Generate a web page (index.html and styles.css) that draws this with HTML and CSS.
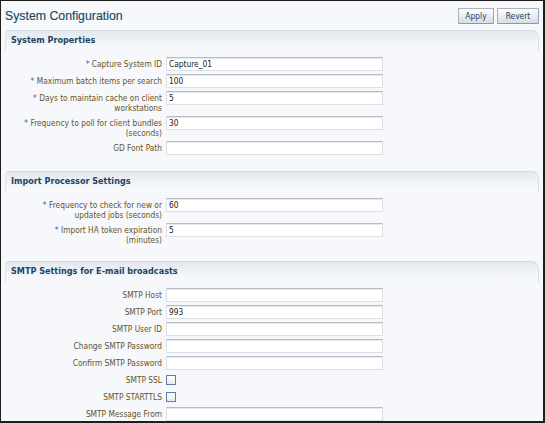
FILE: index.html
```html
<!DOCTYPE html>
<html>
<head>
<meta charset="utf-8">
<title>System Configuration</title>
<link rel="stylesheet" href="styles.css">
</head>
<body>
<div class="frame">
  <div class="topbar">
    <h1 class="title">System Configuration</h1>
    <div class="actions">
      <button class="btn btn-apply">Apply</button>
      <button class="btn btn-revert">Revert</button>
    </div>
  </div>

  <section class="panel">
    <h2 class="panel-head">System Properties</h2>
    <div class="panel-body">
      <div class="row"><label class="lbl"><span class="req">*</span> Capture System ID</label><input class="inp" type="text" value="Capture_01"></div>
      <div class="row"><label class="lbl"><span class="req">*</span> Maximum batch items per search</label><input class="inp" type="text" value="100"></div>
      <div class="row"><label class="lbl"><span class="req">*</span> Days to maintain cache on client<br>workstations</label><input class="inp" type="text" value="5"></div>
      <div class="row"><label class="lbl"><span class="req">*</span> Frequency to poll for client bundles<br>(seconds)</label><input class="inp" type="text" value="30"></div>
      <div class="row"><label class="lbl">GD Font Path</label><input class="inp" type="text" value=""></div>
    </div>
  </section>

  <section class="panel">
    <h2 class="panel-head">Import Processor Settings</h2>
    <div class="panel-body">
      <div class="row"><label class="lbl"><span class="req">*</span> Frequency to check for new or<br>updated jobs (seconds)</label><input class="inp" type="text" value="60"></div>
      <div class="row"><label class="lbl"><span class="req">*</span> Import HA token expiration<br>(minutes)</label><input class="inp" type="text" value="5"></div>
    </div>
  </section>

  <section class="panel">
    <h2 class="panel-head">SMTP Settings for E-mail broadcasts</h2>
    <div class="panel-body panel-body-smtp">
      <div class="row"><label class="lbl">SMTP Host</label><input class="inp" type="text" value=""></div>
      <div class="row"><label class="lbl">SMTP Port</label><input class="inp" type="text" value="993"></div>
      <div class="row"><label class="lbl">SMTP User ID</label><input class="inp" type="text" value=""></div>
      <div class="row"><label class="lbl">Change SMTP Password</label><input class="inp" type="password" value=""></div>
      <div class="row"><label class="lbl">Confirm SMTP Password</label><input class="inp" type="password" value=""></div>
      <div class="row"><label class="lbl">SMTP SSL</label><input class="cb" type="checkbox"></div>
      <div class="row"><label class="lbl">SMTP STARTTLS</label><input class="cb" type="checkbox"></div>
      <div class="row"><label class="lbl">SMTP Message From</label><input class="inp" type="text" value=""></div>
    </div>
  </section>
</div>
</body>
</html>
```

FILE: styles.css
```css
html, body {
  margin: 0;
  padding: 0;
  background: #f6f8fc;
  font-family: "Liberation Sans", Arial, sans-serif;
}

.frame {
  box-sizing: border-box;
  width: 545px;
  height: 423px;
  border-style: solid;
  border-color: #1e1e1e;
  border-width: 1px 2px 2px 1px;
  padding: 0 4px;
  background: #f6f8fc;
  overflow: hidden;
}

.topbar {
  display: flex;
  justify-content: space-between;
  align-items: center;
  height: 16px;
  padding-top: 7px;
  margin-bottom: 6px;
}

.title {
  margin: 0;
  font-size: 12.3px;
  font-weight: normal;
  line-height: 16px;
  color: #1d4866;
  -webkit-text-stroke: 0.15px #1d4866;
}

.actions {
  display: flex;
  gap: 3px;
}

.btn {
  box-sizing: border-box;
  height: 16px;
  padding: 0;
  font-family: "DejaVu Sans Condensed", "Liberation Sans", Arial, sans-serif;
  font-size: 8.4px;
  color: #1d3f5e;
  border: 1px solid #aab2bb;
  border-bottom-color: #8f98a2;
  border-right-color: #9ba4ae;
  border-radius: 1px;
  background: linear-gradient(#fdfefe, #e8ecf1 55%, #d6dde5);
}

.btn-apply { width: 36px; }
.btn-revert { width: 42px; }

.panel {
  margin-bottom: 16px;
}

.panel-head {
  box-sizing: border-box;
  height: 22px;
  margin: 0;
  padding: 3px 0 0 5px;
  font-family: "DejaVu Sans Condensed", "Liberation Sans", Arial, sans-serif;
  font-size: 9px;
  font-weight: bold;
  line-height: 12px;
  color: #1c4562;
  border: 1px solid #d3d9e0;
  border-bottom: 0;
  border-left-color: #e3e7ed;
  border-right-color: #dde2e8;
  border-radius: 4px 7px 0 0;
  background: linear-gradient(#e3e8ef, #f6f8fc 16px);
}

.panel-body {
  padding-top: 5px;
}

.panel-body-smtp {
  padding-top: 5px;
}

.row {
  display: flex;
  align-items: flex-start;
  min-height: 14px;
  margin-bottom: 3px;
}

.lbl {
  flex: none;
  box-sizing: border-box;
  width: 157px;
  margin-right: 4px;
  padding-top: 2px;
  text-align: right;
  white-space: nowrap;
  font-family: "DejaVu Sans Condensed", "Liberation Sans", Arial, sans-serif;
  font-size: 8.3px;
  line-height: 10px;
  color: #665426;
}

.req {
  color: #3b6ea5;
  font-size: 9px;
}

.inp {
  box-sizing: border-box;
  width: 217px;
  height: 14px;
  margin: 0;
  padding: 0 0 0 2px;
  border: 1px solid #dce0e5;
  border-top-color: #b7bdc4;
  box-shadow: inset 0 1px 0 #e6e9ec;
  background: #fff;
  font-family: "DejaVu Sans Condensed", "Liberation Sans", Arial, sans-serif;
  font-size: 8.3px;
  color: #222;
  outline: none;
}

.cb {
  -webkit-appearance: none;
  appearance: none;
  box-sizing: border-box;
  width: 10px;
  height: 10px;
  margin: 2px 0 0 0;
  border: 1px solid #5f7f9c;
  border-radius: 0;
  background: linear-gradient(#ffffff, #e6eaef);
}
```
